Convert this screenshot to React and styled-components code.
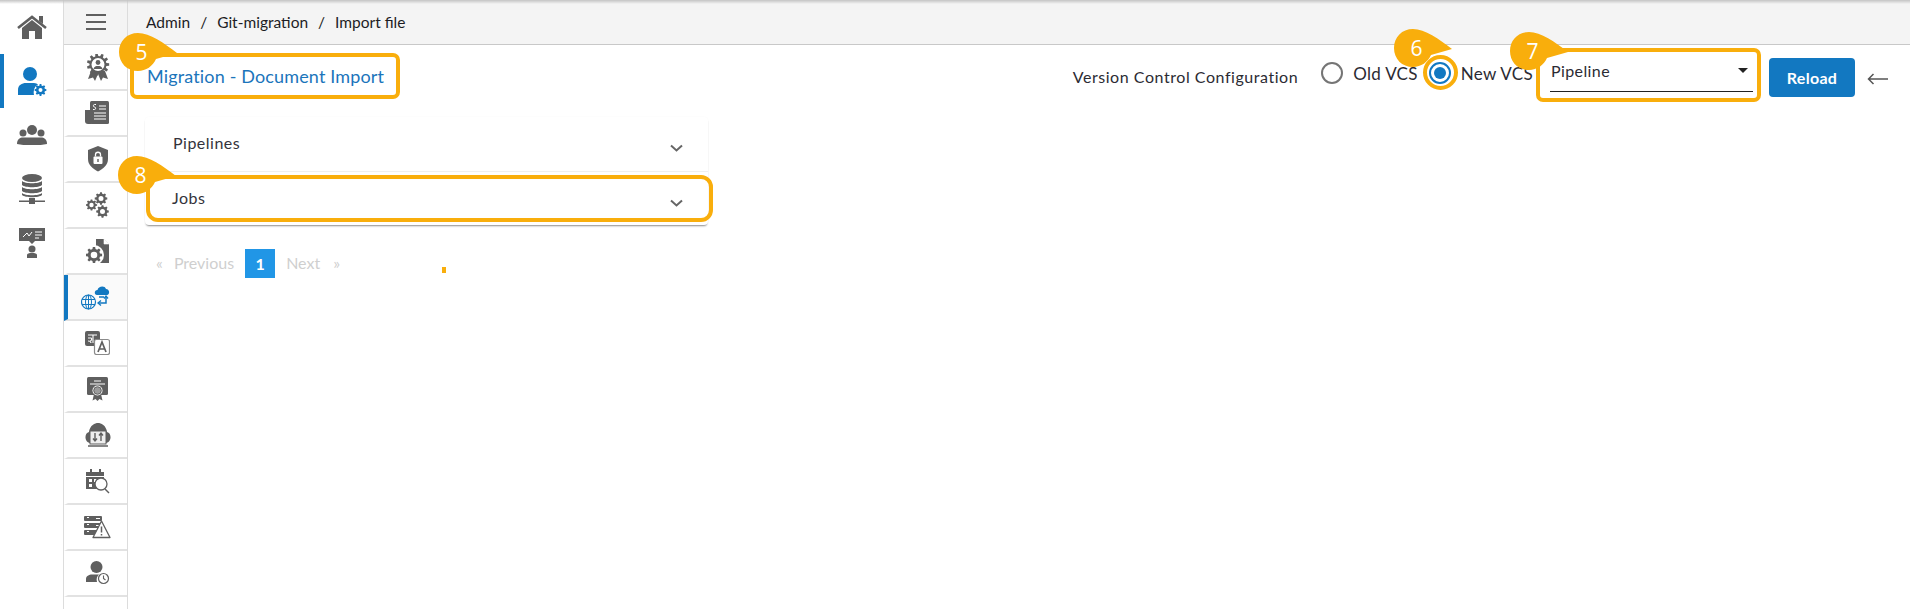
import styled, { createGlobalStyle } from "styled-components";

const BLUE = "#1278c1";
const GREY = "#5f5f5f";
const AMBER = "#f9ae0c";

const GlobalStyles = createGlobalStyle`
  html, body {
    margin: 0;
    height: 100%;
    background: #fff;
    font-family: Lato, "Open Sans", sans-serif;
    color: #2b2b33;
  }
  *, *:before, *:after {
    box-sizing: border-box;
  }
`;

const Page = styled.div`
  position: relative;
  display: flex;
  width: 1910px;
  height: 609px;
  overflow: hidden;
`;

const TopShade = styled.div`
  position: absolute;
  inset: 0 0 auto 0;
  height: 4px;
  background: linear-gradient(#c4c4c4, rgba(220, 220, 220, 0));
`;

const Rail = styled.nav`
  width: 63px;
  flex: none;
  display: flex;
  flex-direction: column;
`;

const RailItem = styled.div`
  height: 54px;
  display: flex;
  align-items: center;
  justify-content: center;
  border-left: 4px solid ${({ $active }) => ($active ? BLUE : "transparent")};
  padding-right: 4px;
`;

const SubNav = styled.nav`
  width: 65px;
  flex: none;
  display: flex;
  flex-direction: column;
  border-left: 1px solid #dcdcdc;
  border-right: 1px solid #dcdcdc;
`;

const Burger = styled.div`
  height: 45px;
  flex: none;
  display: flex;
  flex-direction: column;
  align-items: center;
  justify-content: center;
  gap: 5px;
  background: #f4f4f4;
  border-bottom: 1px solid #d4d4d4;

  span {
    width: 20px;
    height: 2px;
    background: ${GREY};
  }
`;

const SubItem = styled.div`
  height: 46px;
  flex: none;
  display: flex;
  align-items: center;
  justify-content: center;
  border-bottom: 2px solid #e2e2e2;
  border-left: 4px solid ${({ $active }) => ($active ? BLUE : "transparent")};
  padding-right: ${({ $active }) => ($active ? 4 : 0)}px;
  background: ${({ $active }) => ($active ? "#fafafa" : "#fff")};
`;

const Main = styled.main`
  flex: 1;
  display: flex;
  flex-direction: column;
  min-width: 0;
`;

const Crumbs = styled.div`
  height: 45px;
  flex: none;
  display: flex;
  align-items: center;
  gap: 10px;
  padding: 0 0 1px 18px;
  background: #f4f4f4;
  border-bottom: 1px solid #c8c8c8;
  font-size: 15.5px;
  color: #1d1d24;
`;

const TitleBar = styled.header`
  height: 62px;
  flex: none;
  display: flex;
  align-items: center;
  justify-content: space-between;
  padding: 0 22px 0 19px;
`;

const Title = styled.h1`
  margin: 0;
  font-size: 18px;
  font-weight: 400;
  letter-spacing: 0.15px;
  color: #1b75bb;
`;

const Controls = styled.div`
  display: flex;
  align-items: center;
`;

const ControlLabel = styled.span`
  font-size: 16px;
  margin-right: 23px;
  letter-spacing: 0.55px;
`;

const RadioOption = styled.label`
  display: flex;
  align-items: center;
  gap: 10px;
  margin: 0 11px 6px 0;
  font-size: 17px;
  letter-spacing: 0.3px;
`;

const RadioMark = styled.span`
  width: 22px;
  height: 22px;
  border-radius: 50%;
  display: flex;
  align-items: center;
  justify-content: center;
  border: 2px solid ${({ $on }) => ($on ? BLUE : "#757575")};

  &::after {
    content: "";
    width: 12px;
    height: 12px;
    border-radius: 50%;
    background: ${({ $on }) => ($on ? BLUE : "transparent")};
  }
`;

const Select = styled.div`
  width: 203px;
  height: 36px;
  margin: 0 16px 4px 6px;
  padding: 0 0 6px 1px;
  display: flex;
  align-items: center;
  justify-content: space-between;
  border-bottom: 1.5px solid #222;
  font-size: 16px;
  letter-spacing: 0.4px;

  &::after {
    content: "";
    margin-right: 5px;
    border-left: 5px solid transparent;
    border-right: 5px solid transparent;
    border-top: 5px solid #222;
  }
`;

const ReloadButton = styled.button`
  width: 86px;
  height: 39px;
  margin: 3px 12px 0 0;
  border: 0;
  border-radius: 4px;
  background: ${BLUE};
  color: #fff;
  font: 700 16px Lato, sans-serif;
  letter-spacing: 0.3px;
`;

const Content = styled.div`
  padding: 10px 0 0 17px;
`;

const Accordion = styled.section`
  width: 563px;
  border-radius: 4px;
  box-shadow: 0 2px 2px -1px rgba(0, 0, 0, 0.45), 0 0 2px rgba(0, 0, 0, 0.03);
`;

const AccordionRow = styled.div`
  height: 54px;
  display: flex;
  justify-content: space-between;
  padding: 16px 25px 0 ${({ $left }) => $left}px;
  font-size: 16px;
  letter-spacing: 0.5px;
  color: #33333b;
  & + & {
    border-top: 1px solid #efefef;
  }
`;

const Pager = styled.div`
  display: flex;
  align-items: center;
  margin: 24px 0 0 11px;
  height: 29px;
  font-size: 16px;
  color: #cfcfcf;
`;

const PageLink = styled.span`
  margin: 0 ${({ $gap }) => $gap}px 2px 0;
`;

const PageCurrent = styled.span`
  width: 30px;
  height: 29px;
  margin-right: 11px;
  display: flex;
  align-items: center;
  justify-content: center;
  background: #2196e6;
  color: #fff;
  font-weight: 700;
`;

/* annotation layer drawn over the screenshot */
const HighlightBox = styled.div`
  position: absolute;
  left: ${({ $x }) => $x}px;
  top: ${({ $y }) => $y}px;
  width: ${({ $w }) => $w}px;
  height: ${({ $h }) => $h}px;
  border: 4px solid ${AMBER};
  border-radius: ${({ $r }) => $r}px;
  pointer-events: none;
`;

const BadgeWrap = styled.div`
  position: absolute;
  left: ${({ $x }) => $x}px;
  top: ${({ $y }) => $y}px;
  width: 60px;
  height: 38px;
`;

const BadgeNumber = styled.span`
  position: absolute;
  left: 0;
  top: 0;
  width: 45px;
  height: 38px;
  display: flex;
  align-items: center;
  justify-content: center;
  color: #fff;
  font: 400 21px "Open Sans", sans-serif;
`;

const Dot = styled.div`
  position: absolute;
  left: 442px;
  top: 267px;
  width: 4px;
  height: 6px;
  background: ${AMBER};
`;

const Badge = ({ x, y, n }) => (
  <BadgeWrap $x={x} $y={y}>
    <svg width="60" height="38" viewBox="0 0 60 38">
      <path d="M19 0C31 0 45 10 58 20L37 26C34 33 27 38 19 38 8 38 0 30 0 19S8 0 19 0Z" fill={AMBER} />
    </svg>
    <BadgeNumber>{n}</BadgeNumber>
  </BadgeWrap>
);

// toothed ring, used by all the gear icons
const gearPath = (cx, cy, r, hole, teeth = 8) => {
  const pts = [];
  const step = (Math.PI * 2) / teeth;
  for (let i = 0; i < teeth; i++) {
    const a = i * step;
    [[-0.27, r], [-0.15, r * 1.32], [0.15, r * 1.32], [0.27, r]].forEach(([o, d]) => {
      const t = a + o * step * 1.2;
      pts.push(`${(cx + Math.cos(t) * d).toFixed(2)} ${(cy + Math.sin(t) * d).toFixed(2)}`);
    });
  }
  const ring = `M${cx - hole} ${cy}a${hole} ${hole} 0 1 0 ${hole * 2} 0a${hole} ${hole} 0 1 0 ${-hole * 2} 0Z`;
  return `M${pts.join("L")}Z${ring}`;
};

const Gear = ({ cx, cy, r, hole, fill = GREY, teeth }) => (
  <path d={gearPath(cx, cy, r, hole, teeth)} fill={fill} fillRule="evenodd" />
);

const Icon = ({ w = 28, h = 28, children }) => (
  <svg width={w} height={h} viewBox={`0 0 ${w} ${h}`}>
    {children}
  </svg>
);

const HomeIcon = () => (
  <Icon w={30} h={25}>
    <path d="M5 13L15 5L25 13V24H18V16H12V24H5Z" fill={GREY} />
    <path d="M1 13L15 2L29 13" fill="none" stroke={GREY} strokeWidth="2.6" />
    <path d="M22 1H26V9L22 6Z" fill={GREY} />
  </Icon>
);

const UserGearIcon = () => (
  <Icon w={30} h={29}>
    <circle cx="13" cy="7" r="7" fill={BLUE} />
    <path d="M1 28V23C1 18 5 16 9 16H17C19 16 20 17 21 17.500C18 19 16 23 17 28Z" fill={BLUE} />
    <Gear cx={23.500} cy={23} r={4.500} hole={2} fill={BLUE} />
  </Icon>
);

const GroupIcon = () => (
  <Icon w={30} h={20}>
    <circle cx="15" cy="5" r="5" fill={GREY} />
    <circle cx="6" cy="8" r="3.500" fill={GREY} />
    <circle cx="24" cy="8" r="3.500" fill={GREY} />
    <path d="M0 19C0 14 3 12.500 6 12.500H24C27 12.500 30 14 30 19C26 20 22 20 15 20S4 20 0 19Z" fill={GREY} />
  </Icon>
);

const DatabaseIcon = () => (
  <Icon w={26} h={31}>
    <ellipse cx="13" cy="4" rx="10" ry="4" fill={GREY} />
    <path d="M3 7C6 10 20 10 23 7V11C20 14 6 14 3 11Z" fill={GREY} />
    <path d="M3 13C6 16 20 16 23 13V17C20 20 6 20 3 17Z" fill={GREY} />
    <path d="M3 19C6 22 20 22 23 19V21C20 24 6 24 3 21Z" fill={GREY} />
    <rect x="10" y="24" width="6" height="6" fill={GREY} />
    <rect x="0" y="26.500" width="26" height="1.500" fill={GREY} />
  </Icon>
);

const PresenterIcon = () => (
  <Icon w={26} h={31}>
    <path d="M0 0H26V13H16L13 16L10 13H0Z" fill={GREY} />
    <path d="M4 9L8 5L10 8L13 4" fill="none" stroke="#fff" strokeWidth="1" />
    <path d="M16 4H23M16 7H23M16 10H20" stroke="#fff" strokeWidth="1" />
    <circle cx="13" cy="21" r="3.500" fill={GREY} />
    <path d="M8 30V27C8 25.500 10 25 13 25S18 25.500 18 27V30Z" fill={GREY} />
  </Icon>
);

const AwardIcon = () => (
  <Icon w={24} h={27}>
    <path d="M5 17L2 25L7 23.500L9 27L12 20L15 27L17 23.500L22 25L19 17Z" fill={GREY} />
    <Gear cx={12} cy={10.500} r={8.500} hole={6.500} teeth={11} />
    <circle cx="12" cy="8.500" r="2.400" fill={GREY} />
    <path d="M7.500 15C8 12.500 10 12 12 12S16 12.500 16.500 15Z" fill={GREY} />
  </Icon>
);

const InvoiceIcon = () => (
  <Icon w={25} h={24}>
    <path d="M0 9H6V23H3C1 23 0 22 0 20Z" fill={GREY} />
    <rect x="5" y="0" width="19" height="23" rx="1.500" fill={GREY} />
    <path d="M14 5H21M14 8H21M9 12H21M9 15H21M9 18H21" stroke="#fff" strokeWidth="1.200" />
    <path d="M11 3.500H9.500C8 3.500 8 6 9.500 6S11 8.500 9.500 8.500H8" fill="none" stroke="#fff" strokeWidth="1" />
  </Icon>
);

const ShieldIcon = () => (
  <Icon w={22} h={26}>
    <path d="M11 0L21 4V13C21 19 16 23 11 25.500C6 23 1 19 1 13V4Z" fill={GREY} />
    <rect x="6.500" y="10.500" width="9" height="7.500" rx="1" fill="#fff" />
    <path d="M8.500 10.500V8.500C8.500 5.500 13.500 5.500 13.500 8.500V10.500" fill="none" stroke="#fff" strokeWidth="1.300" />
    <rect x="10.300" y="13" width="1.400" height="3" fill={GREY} />
  </Icon>
);

const GearsIcon = () => (
  <Icon w={24} h={26}>
    <Gear cx={15} cy={6.500} r={4.800} hole={2.500} />
    <Gear cx={5.500} cy={13} r={4.300} hole={2.200} />
    <Gear cx={16.500} cy={19.500} r={4.800} hole={2.500} />
  </Icon>
);

const DocGearIcon = () => (
  <Icon w={24} h={25}>
    <path d="M10 0H18L23 5V24H10Z" fill={GREY} />
    <path d="M18 0V5H23Z" fill="#fff" stroke="#fff" strokeWidth=".6" />
    <circle cx="8" cy="16" r="10" fill="#fff" />
    <Gear cx={8} cy={16} r={6.200} hole={3.300} />
  </Icon>
);

const GlobeCloudIcon = () => (
  <Icon w={30} h={26}>
    <circle cx="7.500" cy="18" r="7" fill="none" stroke={BLUE} strokeWidth="1.200" />
    <ellipse cx="7.500" cy="18" rx="3" ry="7" fill="none" stroke={BLUE} strokeWidth="1" />
    <path d="M1 15.500H14M1 20.500H14M7.500 11V25" stroke={BLUE} strokeWidth="1" />
    <path d="M16 11C13 11 13 6 16.500 6C17 2 24 1 25 5C29 5 29 11 26 11Z" fill={BLUE} />
    <path d="M25 13V19H17" fill="none" stroke={BLUE} strokeWidth="1.500" />
    <path d="M18 13H23M20 16.500L17 19L20 21.500M23 14.500L25 12L27 14.500" fill="none" stroke={BLUE} strokeWidth="1.300" />
  </Icon>
);

const TranslateIcon = () => (
  <Icon w={25} h={24}>
    <rect x="0" y="0" width="15" height="15" rx="2" fill={GREY} />
    <path d="M3 4H12M8 4V12M3 7H6C7 7 7 10 5 10M3 10C5 10 6 11 6 12" fill="none" stroke="#fff" strokeWidth="1.100" />
    <rect x="9.500" y="8.500" width="15" height="15" rx="2" fill="#fff" stroke="#8a8a8a" strokeWidth="1.200" />
    <path d="M13 21L17 11L21 21M14.500 18H19.500" fill="none" stroke={GREY} strokeWidth="1.700" />
  </Icon>
);

const CertificateIcon = () => (
  <Icon w={22} h={24}>
    <rect x="0" y="0" width="21" height="18" rx="1.500" fill={GREY} />
    <path d="M7 4H14M3 7H18" stroke="#fff" strokeWidth="1.200" />
    <path d="M7 17L5.500 23.500L8.500 22L10.500 24L12.500 22L15.500 23.500L14 17Z" fill={GREY} />
    <circle cx="10.500" cy="13.500" r="5" fill="#fff" />
    <circle cx="10.500" cy="13.500" r="3.800" fill="#9b9b9b" stroke={GREY} />
  </Icon>
);

const CloudLaptopIcon = () => (
  <Icon w={26} h={25}>
    <path d="M6 20C-1 20 -1 10 4 9C5 2 10 0 13 0S21 2 22 9C27 10 27 20 20 20Z" fill={GREY} />
    <rect x="5" y="8" width="16" height="13" fill="#eee" stroke={GREY} />
    <path d="M3 23H23" stroke={GREY} strokeWidth="1.500" />
    <path d="M10 10V18M8 15.500L10 18L12 15.500M16 18V10M14 12.500L16 10L18 12.500" fill="none" stroke={GREY} strokeWidth="1.400" />
  </Icon>
);

const CalendarSearchIcon = () => (
  <Icon w={24} h={25}>
    <path d="M4 0H6V3H13V0H15V3H18V7H0V3H4Z" fill={GREY} />
    <rect x="0" y="8" width="18" height="12" fill={GREY} />
    <path d="M3 10H6V13H3ZM8 10H11V13H8ZM3 15H6V18H3Z" fill="#fff" />
    <circle cx="15" cy="15" r="6" fill="#fff" stroke={GREY} strokeWidth="1.300" />
    <path d="M19 20L23 24" stroke={GREY} strokeWidth="1.500" />
  </Icon>
);

const ServerWarnIcon = () => (
  <Icon w={27} h={23}>
    <rect x="0" y="0" width="18" height="5" rx="1" fill={GREY} />
    <rect x="0" y="7" width="18" height="5" rx="1" fill={GREY} />
    <rect x="0" y="14" width="18" height="5" rx="1" fill={GREY} />
    <path d="M3 1.500H5M3 8.500H5M3 15.500H5M12 2.500H16M12 9.500H15" stroke="#fff" strokeWidth="1.200" />
    <path d="M17.500 5L26 21.500H9Z" fill="#fff" stroke={GREY} strokeWidth="1.300" strokeLinejoin="round" />
    <path d="M17.500 10.500V16.500M17.500 18V19.500" stroke={GREY} strokeWidth="1.500" />
  </Icon>
);

const UserClockIcon = () => (
  <Icon w={24} h={24}>
    <circle cx="10.500" cy="6" r="6" fill={GREY} />
    <path d="M0 21V18C0 15 3 13.500 6 13.500H13C11 15 10 18 11 21Z" fill={GREY} />
    <circle cx="17.500" cy="17.500" r="5" fill="#fff" stroke={GREY} strokeWidth="1.200" />
    <path d="M17.500 14.500V17.500L19.500 19" fill="none" stroke={GREY} strokeWidth="1.100" />
  </Icon>
);

const Chevron = () => (
  <svg width="13" height="8" viewBox="0 0 13 8" style={{ marginTop: 11 }}>
    <path d="M1 1.500L6.500 6.500L12 1.500" fill="none" stroke="#666" strokeWidth="2" />
  </svg>
);

const BackArrow = () => (
  <svg width="21" height="12" viewBox="0 0 21 12" style={{ marginTop: 6 }}>
    <path d="M21 6H1.500M6.500 1L1.500 6L6.500 11" fill="none" stroke="#555" strokeWidth="1.500" />
  </svg>
);

const railIcons = [HomeIcon, UserGearIcon, GroupIcon, DatabaseIcon, PresenterIcon];
const subIcons = [
  AwardIcon,
  InvoiceIcon,
  ShieldIcon,
  GearsIcon,
  DocGearIcon,
  GlobeCloudIcon,
  TranslateIcon,
  CertificateIcon,
  CloudLaptopIcon,
  CalendarSearchIcon,
  ServerWarnIcon,
  UserClockIcon,
];

export default function App() {
  return (
    <>
      <GlobalStyles />
      <Page>
        <Rail>
          {railIcons.map((RailIcon, i) => (
            <RailItem key={i} $active={i === 1}>
              <RailIcon />
            </RailItem>
          ))}
        </Rail>
        <SubNav>
          <Burger>
            <span />
            <span />
            <span />
          </Burger>
          {subIcons.map((SubIcon, i) => (
            <SubItem key={i} $active={i === 5}>
              <SubIcon />
            </SubItem>
          ))}
        </SubNav>
        <Main>
          <Crumbs>
            <span>Admin</span>
            <span>/</span>
            <span>Git-migration</span>
            <span>/</span>
            <span>Import file</span>
          </Crumbs>
          <TitleBar>
            <Title>Migration - Document Import</Title>
            <Controls>
              <ControlLabel>Version Control Configuration</ControlLabel>
              <RadioOption>
                <RadioMark />
                Old VCS
              </RadioOption>
              <RadioOption>
                <RadioMark $on />
                New VCS
              </RadioOption>
              <Select>Pipeline</Select>
              <ReloadButton>Reload</ReloadButton>
              <BackArrow />
            </Controls>
          </TitleBar>
          <Content>
            <Accordion>
              <AccordionRow $left={28}>
                Pipelines
                <Chevron />
              </AccordionRow>
              <AccordionRow $left={27}>
                Jobs
                <Chevron />
              </AccordionRow>
            </Accordion>
            <Pager>
              <PageLink $gap={11}>«</PageLink>
              <PageLink $gap={11}>Previous</PageLink>
              <PageCurrent>1</PageCurrent>
              <PageLink $gap={13}>Next</PageLink>
              <PageLink $gap={0}>»</PageLink>
            </Pager>
          </Content>
        </Main>
        <TopShade />
        <Dot />
        <HighlightBox $x={130} $y={53} $w={270} $h={46} $r={7} />
        <HighlightBox $x={1423} $y={55} $w={35} $h={35} $r={18} />
        <HighlightBox $x={1536} $y={48} $w={225} $h={54} $r={7} />
        <HighlightBox $x={146} $y={175} $w={567} $h={47} $r={12} />
        <Badge x={119} y={33} n={5} />
        <Badge x={1394} y={29} n={6} />
        <Badge x={1510} y={32} n={7} />
        <Badge x={118} y={156} n={8} />
      </Page>
    </>
  );
}
